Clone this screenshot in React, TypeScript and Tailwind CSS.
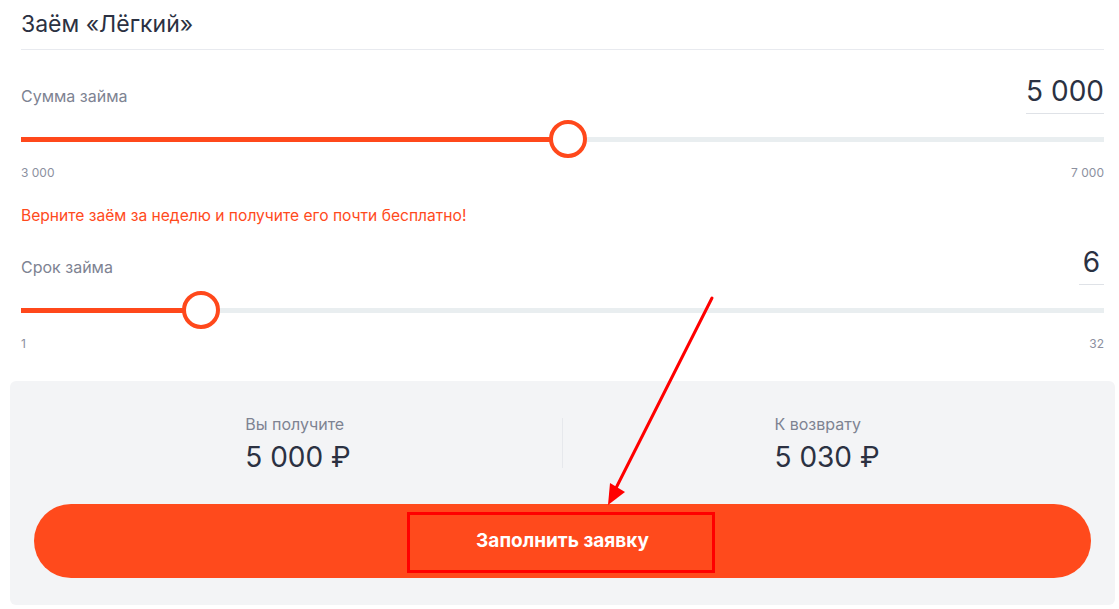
import React from "react";

const sliders = {
  sum: { label: "Сумма займа", value: "5 000", min: "3 000", max: "7 000", pct: 50.5 },
  term: { label: "Срок займа", value: "6", min: "1", max: "32", pct: 16.6 },
};

function Slider({ pct }: { pct: number }) {
  return (
    <div className="relative h-[38px] flex items-center">
      <div className="w-full h-[5px] bg-[#e9eef0]" />
      <div className="absolute left-0 h-[5px] bg-[#ff481b]" style={{ width: `${pct}%` }} />
      <div
        className="absolute w-[38px] h-[38px] -ml-[19px] rounded-full border-[4px] border-[#ff481b] bg-white"
        style={{ left: `${pct}%` }}
      />
    </div>
  );
}

function Field({ s, top }: { s: typeof sliders.sum; top: string }) {
  return (
    <div>
      <div className={`flex justify-between items-start ${top}`}>
        <span className="mt-[10px] text-[16px] leading-6 text-[#7e8392]">{s.label}</span>
        <span className="min-w-[25px] text-center text-[28px] leading-[34px] text-[#2b3142] pb-[5px] border-b border-[#dfe2e7]">
          {s.value}
        </span>
      </div>
      <div className="mt-[6px]">
        <Slider pct={s.pct} />
      </div>
      <div className="mt-[7px] flex justify-between text-[12px] leading-4 text-[#8c90a0]">
        <span>{s.min}</span>
        <span>{s.max}</span>
      </div>
    </div>
  );
}

export default function App() {
  return (
    <div className="relative w-[1119px] h-[609px] overflow-hidden bg-white font-['Inter',sans-serif]">
      <div className="pl-[21px] pr-[15px]">
        <h1 className="h-[50px] flex items-center text-[23px] text-[#2b3142] border-b border-[#e8eaef]">
          Заём «Лёгкий»
        </h1>
        <Field s={sliders.sum} top="mt-[24px]" />
        <p className="mt-[23px] text-[15.6px] leading-6 text-[#ff4a1c]">
          Верните заём за неделю и получите его почти бесплатно!
        </p>
        <Field s={sliders.term} top="mt-[17px]" />
      </div>

      <div className="mt-[29px] ml-[10px] mr-[4px] h-[224px] rounded-md bg-[#f3f4f6] px-6 pt-[31px]">
        <div className="grid grid-cols-[1fr_1px_1fr] items-center">
          <div className="flex justify-center">
            <div>
              <div className="text-[16px] leading-6 text-[#7e8392]">Вы получите</div>
              <div className="mt-[4px] text-[28px] leading-[34px] text-[#2b3142]">5 000 ₽</div>
            </div>
          </div>
          <div className="h-[50px] bg-[#e6e8ec]" />
          <div className="flex justify-center">
            <div>
              <div className="text-[16px] leading-6 text-[#7e8392]">К возврату</div>
              <div className="mt-[4px] text-[28px] leading-[34px] text-[#2b3142]">5 030 ₽</div>
            </div>
          </div>
        </div>
        <button className="mt-[30px] w-full h-[74px] rounded-full bg-[#ff4a1c] text-white text-[19px] font-bold">
          Заполнить заявку
        </button>
      </div>

      {/* annotation overlay */}
      <svg className="absolute inset-0 pointer-events-none" width="1119" height="609">
        <rect x="408.5" y="513.5" width="305" height="58" fill="none" stroke="#ff0000" strokeWidth="3" />
        <line x1="712" y1="298" x2="614" y2="492" stroke="#ff0000" strokeWidth="3" strokeLinecap="round" />
        <polygon points="608,505 610,483 625,492" fill="#ff0000" />
      </svg>
    </div>
  );
}
